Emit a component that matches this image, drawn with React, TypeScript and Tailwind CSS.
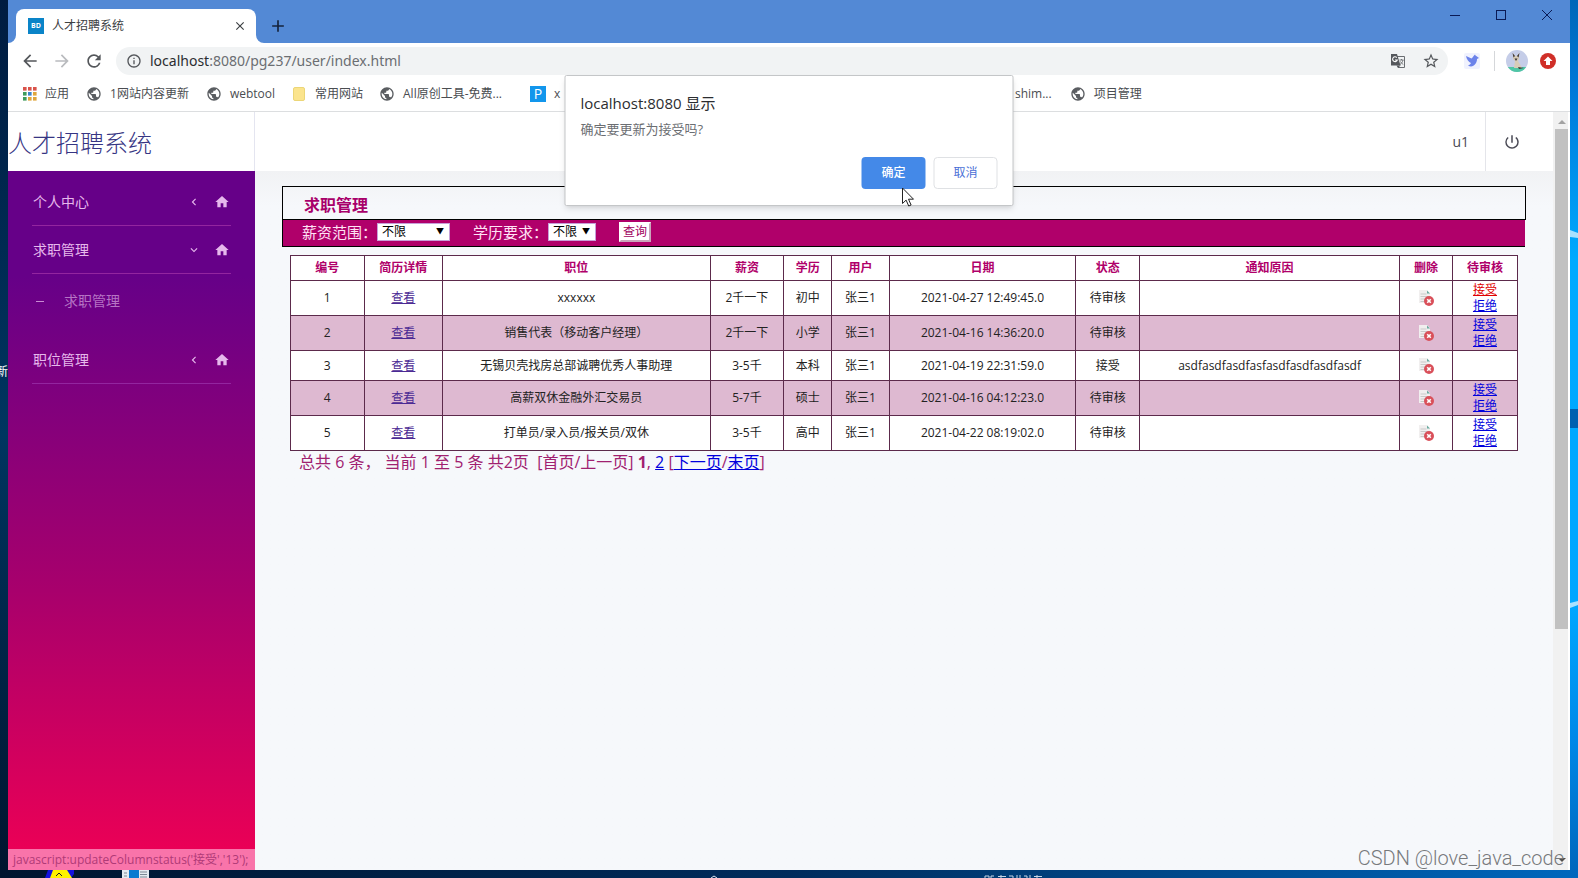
import React from "react";
import {
  MdArrowBack,
  MdArrowForward,
  MdRefresh,
  MdInfoOutline,
  MdPublic,
  MdStarBorder,
  MdPowerSettingsNew,
  MdHome,
  MdClose,
  MdAdd,
  MdChevronLeft,
  MdExpandMore,
} from "react-icons/md";

type Job = {
  id: number;
  title: string;
  salary: string;
  degree: string;
  user: string;
  date: string;
  status: string;
  reason: string;
  pending: boolean;
  active?: boolean;
};

const jobs: Job[] = [
  { id: 1, title: "xxxxxx", salary: "2千一下", degree: "初中", user: "张三1", date: "2021-04-27 12:49:45.0", status: "待审核", reason: "", pending: true, active: true },
  { id: 2, title: "销售代表（移动客户经理）", salary: "2千一下", degree: "小学", user: "张三1", date: "2021-04-16 14:36:20.0", status: "待审核", reason: "", pending: true },
  { id: 3, title: "无锡贝壳找房总部诚聘优秀人事助理", salary: "3-5千", degree: "本科", user: "张三1", date: "2021-04-19 22:31:59.0", status: "接受", reason: "asdfasdfasdfasfasdfasdfasdfasdf", pending: false },
  { id: 4, title: "高薪双休金融外汇交易员", salary: "5-7千", degree: "硕士", user: "张三1", date: "2021-04-16 04:12:23.0", status: "待审核", reason: "", pending: true },
  { id: 5, title: "打单员/录入员/报关员/双休", salary: "3-5千", degree: "高中", user: "张三1", date: "2021-04-22 08:19:02.0", status: "待审核", reason: "", pending: true },
];

const columns = [
  { label: "编号", width: "w-[6%]" },
  { label: "简历详情", width: "w-[6.4%]" },
  { label: "职位", width: "w-[21.8%]" },
  { label: "薪资", width: "w-[6%]" },
  { label: "学历", width: "w-[3.9%]" },
  { label: "用户", width: "w-[4.7%]" },
  { label: "日期", width: "w-[15.2%]" },
  { label: "状态", width: "w-[5.2%]" },
  { label: "通知原因", width: "w-[21.2%]" },
  { label: "删除", width: "w-[4.3%]" },
  { label: "待审核", width: "w-[5.3%]" },
];

function Bookmark({ icon, label, className = "" }: { icon?: React.ReactNode; label: string; className?: string }) {
  return (
    <a href="#" className={`flex shrink-0 items-center gap-2 whitespace-nowrap text-xs text-[#4a4d51] ${className}`}>
      {icon}
      {label}
    </a>
  );
}

const globe = <MdPublic className="size-4 text-[#5a5d61]" />;

function AppsIcon() {
  const colors = ["#d9534a", "#d9534a", "#d9534a", "#3f9b5b", "#3d84c9", "#e0a63c", "#3f9b5b", "#e0a63c", "#e0a63c"];
  return (
    <svg viewBox="0 0 14 14" className="size-[14px]" aria-hidden="true">
      {colors.map((c, i) => (
        <rect key={i} x={(i % 3) * 5} y={Math.floor(i / 3) * 5} width="3.6" height="3.6" fill={c} />
      ))}
    </svg>
  );
}

function TranslateIcon() {
  return (
    <svg viewBox="0 0 16 16" className="size-4" aria-hidden="true">
      <path d="M7 3.500h7.500v11H8" fill="none" stroke="#6a6d71" />
      <path d="M9.500 7h4M11.500 6v1M13 7c-0.500 2-1.500 3.500-3 4.500M10.500 8.500c0.500 1.200 1.500 2.200 2.800 3" fill="none" stroke="#6a6d71" strokeWidth="0.900" />
      <path d="M1 1h6l3.500 11.500H1z" fill="#55585c" />
      <path d="M6.800 4.600a2.400 2.400 0 1 0 0.500 2.400H5" fill="none" stroke="#fff" strokeWidth="1.100" />
      <path d="M6.500 12.500h4L8 15z" fill="#55585c" />
    </svg>
  );
}

function DeleteIcon() {
  return (
    <svg viewBox="0 0 16 16" className="size-4" aria-hidden="true">
      <path d="M1 0h8l3 3v10H1z" fill="#f1efef" />
      <path d="M2.500 4h6M2.500 6.500h7M2.500 9h5M2.500 11.500h4" stroke="#c9c9c9" strokeWidth="1" />
      <path d="M9 0.500l3 3h-3z" fill="#69aaa0" />
      <circle cx="11" cy="11" r="5" fill="#d9505a" />
      <path d="M9.200 9.200l3.600 3.600M12.800 9.200l-3.600 3.600" stroke="#fff" strokeWidth="1.600" />
    </svg>
  );
}

function TitleBar() {
  return (
    <div className="flex h-[43px] justify-between bg-[#5389d5]">
      <div className="flex items-end pl-2">
        <div className="relative flex h-[34px] w-60 items-center rounded-t-lg bg-white pr-2 pl-3">
          <svg viewBox="0 0 8 8" className="absolute bottom-0 -left-2 size-2" aria-hidden="true">
            <path d="M8 0v8H0a8 8 0 0 0 8-8z" fill="#fff" />
          </svg>
          <svg viewBox="0 0 8 8" className="absolute -right-2 bottom-0 size-2" aria-hidden="true">
            <path d="M0 0v8h8a8 8 0 0 1-8-8z" fill="#fff" />
          </svg>
          <span className="flex size-4 items-center justify-center bg-[#0a84c8] text-[7px] font-bold text-white">BD</span>
          <span className="ml-2 flex-1 text-xs text-[#3c4043]">人才招聘系统</span>
          <button aria-label="关闭标签页" className="pr-px text-[#3c4043]">
            <MdClose className="size-[14px]" />
          </button>
        </div>
        <button aria-label="新标签页" className="mb-[7px] ml-3 text-[#15233c]">
          <MdAdd className="size-5" />
        </button>
      </div>
      <div className="flex h-[30px] items-center gap-9 pr-[18px] text-[#0a1a55]">
        <button aria-label="最小化">
          <svg viewBox="0 0 10 10" className="size-[10px]"><path d="M0 5.500h10" stroke="currentColor" /></svg>
        </button>
        <button aria-label="最大化">
          <svg viewBox="0 0 10 10" className="size-[10px]"><rect x="0.500" y="0.500" width="9" height="9" fill="none" stroke="currentColor" /></svg>
        </button>
        <button aria-label="关闭">
          <svg viewBox="0 0 10 10" className="size-[10px]"><path d="M0 0l10 10M10 0L0 10" stroke="currentColor" /></svg>
        </button>
      </div>
    </div>
  );
}

function Toolbar() {
  return (
    <div className="flex h-9 items-center pr-[14px] pl-3 text-[#54575b]">
      <button aria-label="后退"><MdArrowBack className="size-5" /></button>
      <button aria-label="前进" className="ml-3 text-[#b9bbbe]"><MdArrowForward className="size-5" /></button>
      <button aria-label="重新加载" className="ml-3"><MdRefresh className="size-5" /></button>
      <div className="ml-3 flex h-7 flex-1 items-center rounded-full bg-[#f1f3f4] pr-2 pl-[10px]">
        <MdInfoOutline className="size-4 shrink-0" />
        <div className="ml-2 flex-1 font-['Noto_Sans',sans-serif] text-sm text-[#6b6e72]">
          <span className="text-[#2b2d30]">localhost</span>:8080/pg237/user/index.html
        </div>
        <button aria-label="翻译此页"><TranslateIcon /></button>
        <button aria-label="添加书签" className="ml-4"><MdStarBorder className="size-[18px]" /></button>
      </div>
      <button aria-label="扩展程序" className="ml-4">
        <svg viewBox="0 0 16 16" className="size-4">
          <rect width="16" height="16" rx="2" fill="#f0f2fe" />
          <path d="M2 3l5.500 2.500C9 4.500 10 2 11 1.500c0.500 1 1 1.500 2 2L15 5l-2 1c0 4-2.500 7-6 7.500-1 0-2-0.500-3-1 1.500-0.500 2.500-1.500 3-2.500C4.500 9 2.500 6 2 3z" fill="#6c83ea" />
        </svg>
      </button>
      <span className="ml-[14px] h-5 w-px bg-[#d5d7da]" />
      <button aria-label="用户资料" className="ml-[11px]">
        <svg viewBox="0 0 22 22" className="size-[22px]">
          <circle cx="11" cy="11" r="11" fill="#c5cde8" />
          <path d="M1.800 17a11 11 0 0 0 18.400 0z" fill="#4fc6a5" />
          <path d="M7 3l2 3h2l2-3v6l-1 2 4 7H8l1-7-2-2z" fill="#d8ccb8" />
          <path d="M6.500 3l1 4.500L9 6zM13.500 3l-1 4.500L11 6zM8.500 8.500h3L10 11zM12 17l6 1-5 1z" fill="#3d3736" />
        </svg>
      </button>
      <button aria-label="更新" className="ml-3">
        <svg viewBox="0 0 16 16" className="size-4">
          <circle cx="8" cy="8" r="8" fill="#d02f28" />
          <path d="M8 3.500L12.500 8H10v4H6V8H3.500z" fill="#fff" />
        </svg>
      </button>
    </div>
  );
}

function BookmarksBar() {
  return (
    <div className="flex h-[33px] items-center border-b border-[#dcdee0] pb-[2px] pl-[15px]">
      <div className="flex w-[992px] items-center">
        <Bookmark icon={<AppsIcon />} label="应用" />
        <Bookmark icon={globe} label="1网站内容更新" className="ml-[17px]" />
        <Bookmark icon={globe} label="webtool" className="ml-[17px]" />
        <Bookmark
          icon={<span className="mr-[2px] h-[14px] w-3 rounded-xs border border-[#ecd677] bg-[#fbe48d]" />}
          label="常用网站"
          className="ml-[18px]"
        />
        <Bookmark icon={globe} label="All原创工具-免费..." className="ml-4" />
        <Bookmark
          icon={<span className="flex size-4 items-center justify-center bg-[#1296ec] text-sm text-white">P</span>}
          label="x"
          className="ml-7"
        />
      </div>
      <Bookmark label="shim..." />
      <Bookmark icon={globe} label="项目管理" className="ml-[18px]" />
    </div>
  );
}

function MenuItem({ label, open = false }: { label: string; open?: boolean }) {
  return (
    <a href="#" className="flex h-12 items-center border-b border-[#93259f] pl-px text-sm text-[#e6b8ec]">
      <span className="flex-1">{label}</span>
      {open ? <MdExpandMore className="size-[14px]" /> : <MdChevronLeft className="size-[14px]" />}
      <MdHome className="mr-[1px] ml-[13px] size-4" />
    </a>
  );
}

function Sidebar() {
  return (
    <nav className="relative w-[247px] shrink-0 bg-linear-to-b/srgb from-[#660088] from-15% via-[#a8006c] via-60% to-[#ea0056] to-97% px-6 pt-[7px]">
      <MenuItem label="个人中心" />
      <MenuItem label="求职管理" open />
      <a href="#" className="flex h-[62px] items-center gap-5 pb-2 pl-1 text-sm text-[#b673c4]">
        <span className="h-px w-2 bg-[#c98bd3]" />
        求职管理
      </a>
      <MenuItem label="职位管理" />
      <div className="absolute bottom-0 left-0 h-[21px] w-full overflow-hidden bg-[#f974aa] pl-[5px] text-xs leading-[22px] whitespace-nowrap text-[#b03a77]">
        javascript:updateColumnstatus('接受','13');
      </div>
    </nav>
  );
}

function FilterBar() {
  return (
    <form className="mr-px flex h-[27px] items-center border-b border-l border-black bg-[#b0006a] pb-[2px] pl-[19px] text-[15px] text-[#ffe3f5]">
      <label htmlFor="salary">薪资范围：</label>
      <div className="relative flex">
        <select id="salary" className="h-[18px] w-[73px] appearance-none border border-[#c7a0d8] bg-white pl-1 text-xs leading-4 text-black">
          <option>不限</option>
        </select>
        <span className="pointer-events-none absolute top-0 right-[6px] text-[8px] leading-4 text-black">▼</span>
      </div>
      <label htmlFor="degree" className="ml-[23px]">学历要求：</label>
      <div className="relative flex">
        <select id="degree" className="h-[18px] w-12 appearance-none border border-[#c7a0d8] bg-white pl-1 text-xs leading-4 text-black">
          <option>不限</option>
        </select>
        <span className="pointer-events-none absolute top-0 right-[6px] text-[8px] leading-4 text-black">▼</span>
      </div>
      <button type="button" className="ml-[23px] h-5 w-8 border-2 border-t-white border-r-[#c9a5bb] border-b-[#c9a5bb] border-l-white bg-white text-xs leading-4 whitespace-nowrap text-[#a00060]">
        查询
      </button>
    </form>
  );
}

function JobTable() {
  return (
    <table className="w-full table-fixed border-collapse text-center text-xs leading-4 text-[#222]">
      <thead>
        <tr className="h-[25px] bg-white text-[#b0006a]">
          {columns.map((c) => (
            <th key={c.label} className={`border border-[#5c2a4b] font-bold ${c.width}`}>{c.label}</th>
          ))}
        </tr>
      </thead>
      <tbody>
        {jobs.map((job) => (
          <tr key={job.id} className={`${job.pending ? "h-[35px]" : "h-[30px]"} ${job.id % 2 ? "bg-white" : "bg-[#deb9d1]"}`}>
            <td className="border border-[#5c2a4b]">{job.id}</td>
            <td className="border border-[#5c2a4b]"><a href="#" className="text-[#4b2a94] underline">查看</a></td>
            <td className="border border-[#5c2a4b]">{job.title}</td>
            <td className="border border-[#5c2a4b]">{job.salary}</td>
            <td className="border border-[#5c2a4b]">{job.degree}</td>
            <td className="border border-[#5c2a4b]">{job.user}</td>
            <td className="border border-[#5c2a4b]">{job.date}</td>
            <td className="border border-[#5c2a4b]">{job.status}</td>
            <td className="border border-[#5c2a4b]">{job.reason}</td>
            <td className="border border-[#5c2a4b]">
              <button aria-label="删除" className="flex w-full justify-center"><DeleteIcon /></button>
            </td>
            <td className="border border-[#5c2a4b]">
              {job.pending && (
                <div className="flex flex-col items-center">
                  <a href="#" className={job.active ? "text-[#e00000] underline" : "text-[#0000dd] underline"}>接受</a>
                  <a href="#" className="text-[#0000dd] underline">拒绝</a>
                </div>
              )}
            </td>
          </tr>
        ))}
      </tbody>
    </table>
  );
}

function Dialog() {
  return (
    <div
      role="dialog"
      aria-labelledby="dialog-title"
      className="absolute top-[75px] left-1/2 w-[449px] -translate-x-1/2 rounded-xs border border-[#c4c6c8] bg-white px-[15px] pt-[15px] pb-4 shadow-md"
    >
      <h2 id="dialog-title" className="text-[15px] leading-6 text-[#2b2d30]">localhost:8080 显示</h2>
      <p className="mt-1 text-[13px] leading-5 text-[#6b6e72]">确定要更新为接受吗?</p>
      <div className="relative mt-[18px] flex justify-end gap-2 text-xs">
        <button className="h-8 w-16 rounded-sm bg-[#4489e8] font-medium text-white">确定</button>
        <button className="h-8 w-16 rounded-sm border border-[#dfe1e4] bg-white text-[#4a6fd6]">取消</button>
        <svg viewBox="0 0 13 20" className="absolute top-[30px] right-[83px] h-5 w-[13px]" aria-hidden="true">
          <path d="M1 1v15.500l3.600-3.400 2.600 5.900 2.400-1-2.600-5.800h5z" fill="#fff" stroke="#222" />
        </svg>
      </div>
    </div>
  );
}

export default function App() {
  return (
    <div className="flex min-h-screen flex-col bg-linear-to-r from-[#00152f] via-[#002c5c] to-[#0067bd] font-['Open_Sans','Noto_Sans_CJK_SC',sans-serif]">
      <div className="flex flex-1">
        <div className="flex w-2 items-center justify-end overflow-hidden bg-linear-to-b from-[#001c40] via-[#003560] to-[#00152f]">
          <span className="shrink-0 pb-[126px] text-xs text-white">新</span>
        </div>
        <div className="relative flex min-w-0 flex-1 flex-col bg-white">
          <TitleBar />
          <Toolbar />
          <BookmarksBar />
          <div className="flex flex-1 pr-[2px]">
            <div className="flex min-w-0 flex-1 flex-col">
              <header className="flex h-[59px] items-center text-[#4a4a55]">
                <h1 className="flex h-full w-[247px] items-center border-r border-[#e4e5f0] font-['Noto_Sans_CJK_SC',sans-serif] text-2xl font-light text-[#363583]">人才招聘系统</h1>
                <span className="ml-auto pr-4 text-sm">u1</span>
                <div className="flex h-full items-center border-l border-[#e4e5ea] pr-8 pl-[17px]">
                  <button aria-label="退出"><MdPowerSettingsNew className="size-[18px]" /></button>
                </div>
              </header>
              <div className="flex flex-1">
                <Sidebar />
                <main className="min-w-0 flex-1 bg-linear-to-b from-[#f1f2f4] to-[#f6f8fb] to-5% px-[27px] pt-[15px]">
                  <h2 className="flex h-[34px] items-center border border-black pt-[3px] pl-[21px] text-base leading-6 font-bold text-[#a8006a]">求职管理</h2>
                  <FilterBar />
                  <div className="px-2 pt-2">
                    <JobTable />
                    <div className="pl-[9px] text-base leading-[22px] text-[#a02070]">
                      总共 6 条， 当前 1 至 5 条 共2页&nbsp; [首页/上一页] <b>1</b>, <a href="#" className="text-[#0000dd] underline">2</a> [
                      <a href="#" className="text-[#0000dd] underline">下一页</a>/<a href="#" className="text-[#0000dd] underline">末页</a>]
                    </div>
                  </div>
                </main>
              </div>
            </div>
            <div className="flex w-[15px] flex-col items-center bg-[#f1f1f1] pl-[2px]">
              <svg viewBox="0 0 8 4" className="mt-2 mb-[5px] h-1 w-2" aria-hidden="true"><path d="M0 4l4-4 4 4z" fill="#a3a3a3" /></svg>
              <div className="h-[66%] w-full bg-[#c1c1c1]" />
              <svg viewBox="0 0 8 4" className="mt-auto mb-2 h-1 w-2" aria-hidden="true"><path d="M0 0l4 4 4-4z" fill="#505050" /></svg>
            </div>
          </div>
          <Dialog />
          <div className="absolute right-[6px] bottom-0 font-['Roboto',sans-serif] text-[20px] leading-6 font-light text-[#77797c]">CSDN @love_java_code</div>
        </div>
        <svg viewBox="0 0 8 870" preserveAspectRatio="none" className="w-2 self-stretch" aria-hidden="true">
          <defs>
            <linearGradient id="sky" x1="0" y1="0" x2="0" y2="1">
              <stop offset="0" stopColor="#0067b8" />
              <stop offset="0.100" stopColor="#0078d8" />
              <stop offset="0.300" stopColor="#00aaff" />
              <stop offset="0.700" stopColor="#00a6ff" />
              <stop offset="0.850" stopColor="#0088e8" />
              <stop offset="1" stopColor="#0067bd" />
            </linearGradient>
          </defs>
          <rect width="8" height="870" fill="url(#sky)" />
          <path d="M0 230l8 3v5l-8-1zM0 603l8-2v4l-8 3z" fill="#a8e2ff" />
          <rect y="409" width="8" height="19" fill="#0060b0" />
        </svg>
      </div>
      <div className="flex h-2 items-start overflow-hidden pl-[45px]" aria-hidden="true">
        <svg viewBox="0 0 30 8" className="h-2 w-[30px]">
          <path d="M3 0h26v4l-3 4H0z" fill="#1212e0" />
          <path d="M8 0h14l5 8H5z" fill="#fff200" />
          <path d="M14 3l3 3M11 6l3-3" stroke="#222" />
        </svg>
        <svg viewBox="0 0 27 8" className="ml-[47px] h-2 w-[27px]">
          <path d="M0 0h27v8H0z" fill="#e4eaf0" />
          <path d="M7 0h10v8H7z" fill="#0a7ad0" />
          <path d="M18 2h7M18 4.500h7M18 7h7M2 3h3M2 6h3" stroke="#7c8894" />
        </svg>
        <svg viewBox="0 0 8 8" className="ml-[561px] h-2 w-2"><path d="M1 8l3-2 3 2" fill="none" stroke="#dfe8f2" /></svg>
        <svg viewBox="0 0 60 8" className="ml-[266px] h-2 w-[60px]">
          <path d="M1 8V6h4v2M7 8V6h3M14 6.500h8M17 8V5M25 6h4v2M33 8V5M36 8V5M40 6h3v2M46 8V5M50 6.500h8M53 8V5" fill="none" stroke="#c6d5e6" />
        </svg>
      </div>
    </div>
  );
}
